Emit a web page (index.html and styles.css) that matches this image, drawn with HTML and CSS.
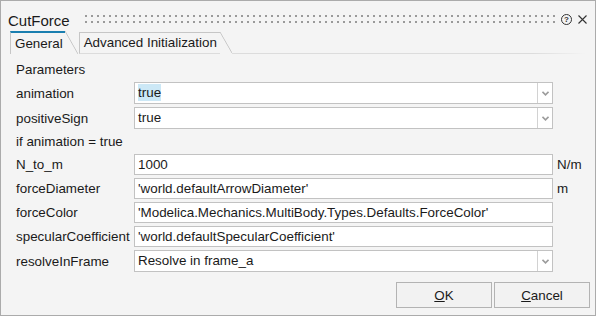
FILE: index.html
```html
<!DOCTYPE html>
<html lang="en">
  <head>
    <meta charset="UTF-8" />
    <title>CutForce</title>
    <link rel="stylesheet" href="styles.css">
  </head>
  <body>
    <div class="dialog">
      <div class="titlebar">
        <span class="title">CutForce</span>
        <span class="grip"></span>
        <span class="help">?</span>
        <svg class="close" width="9" height="9" viewBox="0 0 9 9">
          <path d="M0.5 0.5 L8.5 8.5 M8.5 0.5 L0.5 8.5" stroke="#333" stroke-width="1.1" fill="none" />
        </svg>
      </div>

      <div class="tabs">
        <div class="tab active">General</div>
        <div class="tab">Advanced Initialization</div>
        <div class="tabs-rest"></div>
      </div>

      <div class="pane">
        <div class="group">Parameters</div>

        <div class="row">
          <span class="label">animation</span>
          <div class="combo">
            <span class="value"><span class="selected">true</span></span>
            <span class="arrow">
              <svg width="7" height="5" viewBox="0 0 7 5"><path d="M0.5 0.8 L3.5 3.8 L6.5 0.8" stroke="#9c9c9c" stroke-width="1.6" fill="none" /></svg>
            </span>
          </div>
        </div>

        <div class="row">
          <span class="label">positiveSign</span>
          <div class="combo">
            <span class="value">true</span>
            <span class="arrow">
              <svg width="7" height="5" viewBox="0 0 7 5"><path d="M0.5 0.8 L3.5 3.8 L6.5 0.8" stroke="#9c9c9c" stroke-width="1.6" fill="none" /></svg>
            </span>
          </div>
        </div>

        <div class="group">if animation = true</div>

        <div class="row">
          <span class="label">N_to_m</span>
          <div class="field">1000</div>
          <span class="unit">N/m</span>
        </div>

        <div class="row">
          <span class="label">forceDiameter</span>
          <div class="field">'world.defaultArrowDiameter'</div>
          <span class="unit">m</span>
        </div>

        <div class="row">
          <span class="label">forceColor</span>
          <div class="field">'Modelica.Mechanics.MultiBody.Types.Defaults.ForceColor'</div>
        </div>

        <div class="row">
          <span class="label">specularCoefficient</span>
          <div class="field">'world.defaultSpecularCoefficient'</div>
        </div>

        <div class="row">
          <span class="label">resolveInFrame</span>
          <div class="combo">
            <span class="value">Resolve in frame_a</span>
            <span class="arrow">
              <svg width="7" height="5" viewBox="0 0 7 5"><path d="M0.5 0.8 L3.5 3.8 L6.5 0.8" stroke="#9c9c9c" stroke-width="1.6" fill="none" /></svg>
            </span>
          </div>
        </div>
      </div>

      <div class="buttons">
        <button class="btn"><u>O</u>K</button>
        <button class="btn"><u>C</u>ancel</button>
      </div>
    </div>
  </body>
</html>
```

FILE: styles.css
```css
body {
  margin: 0;
  background-color: #fff;
  font-family: "Liberation Sans", Arial, sans-serif;
  font-size: 13.4px;
  color: #1a1a1a;
}

.dialog {
  width: 596px;
  height: 316px;
  box-sizing: border-box;
  border: 1px solid #ababab;
  background-color: #f4f4f4;
}

/* title bar */
.titlebar {
  display: flex;
  align-items: center;
  height: 29px;
  box-sizing: border-box;
  padding: 7px 8px 0 7px;
}

.title {
  font-size: 15px;
  margin-top: 2px;
}

.grip {
  flex: 1;
  height: 8px;
  margin-left: 15px;
  margin-right: 6px;
  background-image: conic-gradient(from 270deg at 2px 2px, #9a9a9a 25%, transparent 0);
  background-size: 6px 6px;
}

.help {
  width: 11px;
  height: 11px;
  box-sizing: border-box;
  border: 1px solid #333;
  border-radius: 50%;
  font-size: 8px;
  font-weight: 700;
  line-height: 9px;
  text-align: center;
  color: #333;
  margin-right: 6px;
}

/* tabs */
.tabs {
  display: flex;
  align-items: flex-end;
  height: 24px;
  padding-left: 9px;
}

.tab {
  position: relative;
  height: 22px;
  box-sizing: border-box;
  padding: 0 3px 0 4px;
  border-left: 1px solid #c6c6c6;
  border-top: 1px solid #c6c6c6;
  border-bottom: 1px solid #dcdcdc;
  line-height: 20px;
  margin-right: 14px;
}

.tab::after {
  content: "";
  position: absolute;
  top: -1px;
  right: -12px;
  width: 12px;
  height: calc(100% + 1px);
  background: linear-gradient(to top right, transparent calc(50% - 0.8px), #c6c6c6 50%, transparent calc(50% + 0.8px));
}

.tab.active {
  height: 23px;
  padding-right: 2px;
  border-top: 2px solid #1a7fb0;
  border-bottom: none;
  line-height: 21px;
}

.tab.active::after {
  top: -2px;
  right: -13px;
  width: 13px;
  height: calc(100% + 2px);
}

.tabs-rest {
  flex: 1;
  margin-left: -2px;
  margin-right: 10px;
  border-bottom: 1px solid;
  border-image: linear-gradient(to right, #dcdcdc 85%, rgba(220, 220, 220, 0)) 1;
}

/* form */
.pane {
  display: flex;
  flex-direction: column;
  gap: 3px;
  padding: 6px 0 0 15px;
}

.group {
  height: 19px;
  line-height: 19px;
}

.row {
  display: grid;
  grid-template-columns: 114px 419px auto;
  column-gap: 4px;
  align-items: center;
}

.label {
  white-space: nowrap;
}

.field,
.combo {
  height: 21px;
  box-sizing: border-box;
  border: 1px solid #c2c2c2;
  background-color: #fff;
  padding-left: 3px;
  line-height: 19px;
  white-space: nowrap;
  overflow: hidden;
}

.combo {
  display: flex;
  height: 22px;
  line-height: 20px;
  padding-left: 0;
}

.value {
  flex: 1;
  padding-left: 3px;
}

.selected {
  background-color: #cce8f6;
  padding: 1px 0;
}

.arrow {
  width: 14px;
  border-left: 1px solid #d2d2d2;
  display: flex;
  align-items: center;
  justify-content: center;
}

.unit {
  white-space: nowrap;
}

/* buttons */
.buttons {
  display: flex;
  justify-content: flex-end;
  gap: 2px;
  margin-top: 10px;
  padding-right: 5px;
}

.btn {
  width: 96px;
  height: 26px;
  border: 1px solid #b3b3b3;
  background-color: #f2f2f2;
  font-family: inherit;
  font-size: 13.4px;
  color: #1a1a1a;
  padding: 0;
}
```
